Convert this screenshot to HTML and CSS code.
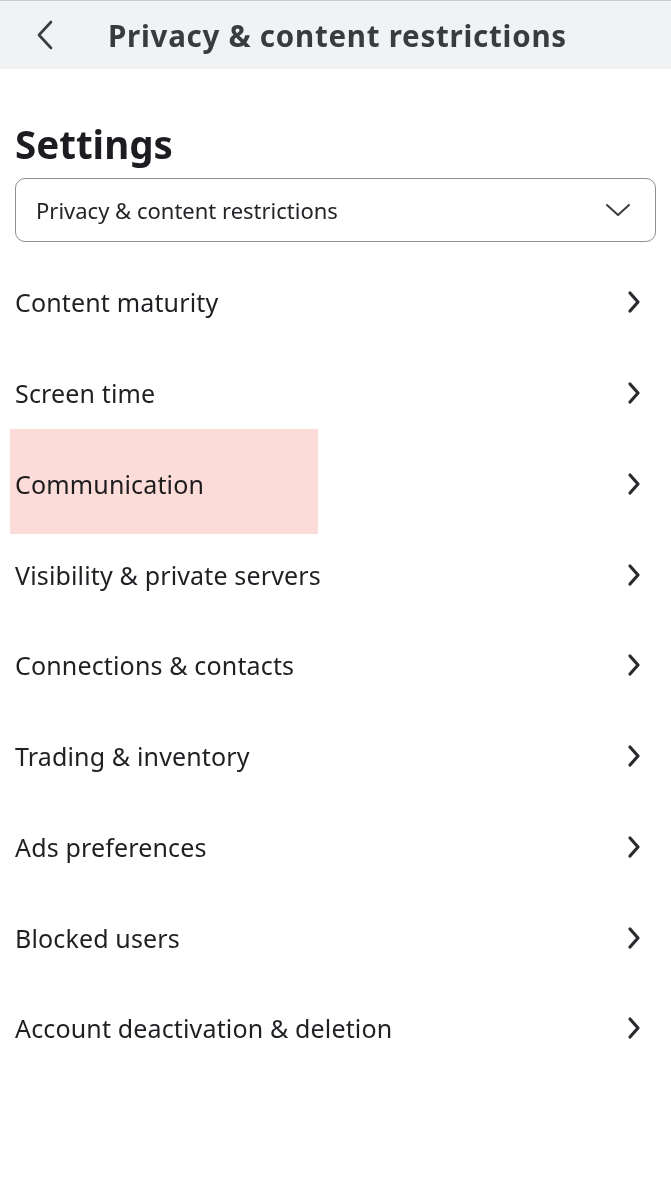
FILE: index.html
```html
<!DOCTYPE html>
<html lang="en">
<head>
<meta charset="utf-8">
<title>Privacy & content restrictions</title>
<link rel="stylesheet" href="styles.css">
</head>
<body>
<header class="topbar">
  <svg class="back" width="20" height="30" viewBox="0 0 20 30" aria-hidden="true"><path d="M16 2 L4 15 L16 28" fill="none" stroke="#3a3c3f" stroke-width="2.6" stroke-linecap="round" stroke-linejoin="round"/></svg>
  <h1 class="topbar-title">Privacy &amp; content restrictions</h1>
</header>
<main class="content">
  <h2 class="page-title">Settings</h2>
  <div class="select">
    <span class="select-label">Privacy &amp; content restrictions</span>
    <svg class="select-chev" width="26" height="16" viewBox="0 0 26 16" aria-hidden="true"><path d="M2 3 L13 13 L24 3" fill="none" stroke="#3a3c3f" stroke-width="2" stroke-linecap="round" stroke-linejoin="round"/></svg>
  </div>
  <ul class="menu">
    <li class="row"><span>Content maturity</span><svg class="chev" width="16" height="24" viewBox="0 0 16 24"><path d="M4 3 L12 12 L4 21" fill="none" stroke="#2a2b2e" stroke-width="3.2" stroke-linecap="round" stroke-linejoin="round"/></svg></li>
    <li class="row"><span>Screen time</span><svg class="chev" width="16" height="24" viewBox="0 0 16 24"><path d="M4 3 L12 12 L4 21" fill="none" stroke="#2a2b2e" stroke-width="3.2" stroke-linecap="round" stroke-linejoin="round"/></svg></li>
    <li class="row row-marked"><span>Communication</span><svg class="chev" width="16" height="24" viewBox="0 0 16 24"><path d="M4 3 L12 12 L4 21" fill="none" stroke="#2a2b2e" stroke-width="3.2" stroke-linecap="round" stroke-linejoin="round"/></svg><i class="mark"></i></li>
    <li class="row"><span>Visibility &amp; private servers</span><svg class="chev" width="16" height="24" viewBox="0 0 16 24"><path d="M4 3 L12 12 L4 21" fill="none" stroke="#2a2b2e" stroke-width="3.2" stroke-linecap="round" stroke-linejoin="round"/></svg></li>
    <li class="row"><span>Connections &amp; contacts</span><svg class="chev" width="16" height="24" viewBox="0 0 16 24"><path d="M4 3 L12 12 L4 21" fill="none" stroke="#2a2b2e" stroke-width="3.2" stroke-linecap="round" stroke-linejoin="round"/></svg></li>
    <li class="row"><span>Trading &amp; inventory</span><svg class="chev" width="16" height="24" viewBox="0 0 16 24"><path d="M4 3 L12 12 L4 21" fill="none" stroke="#2a2b2e" stroke-width="3.2" stroke-linecap="round" stroke-linejoin="round"/></svg></li>
    <li class="row"><span>Ads preferences</span><svg class="chev" width="16" height="24" viewBox="0 0 16 24"><path d="M4 3 L12 12 L4 21" fill="none" stroke="#2a2b2e" stroke-width="3.2" stroke-linecap="round" stroke-linejoin="round"/></svg></li>
    <li class="row"><span>Blocked users</span><svg class="chev" width="16" height="24" viewBox="0 0 16 24"><path d="M4 3 L12 12 L4 21" fill="none" stroke="#2a2b2e" stroke-width="3.2" stroke-linecap="round" stroke-linejoin="round"/></svg></li>
    <li class="row"><span>Account deactivation &amp; deletion</span><svg class="chev" width="16" height="24" viewBox="0 0 16 24"><path d="M4 3 L12 12 L4 21" fill="none" stroke="#2a2b2e" stroke-width="3.2" stroke-linecap="round" stroke-linejoin="round"/></svg></li>
  </ul>
</main>
</body>
</html>
```
FILE: styles.css
```css
* { box-sizing: border-box; }
html, body { margin: 0; padding: 0; background: #fff; }
body {
  font-family: "Noto Sans", "Open Sans", sans-serif;
  color: #1f2023;
  width: 671px;
}
.topbar {
  height: 69px;
  background: #f0f2f3;
  border-top: 1px solid #c9cccf;
  display: flex;
  align-items: center;
  padding-left: 35px;
}
.back { flex: none; }
.topbar-title {
  margin: 0 0 0 53px;
  font-size: 29.5px;
  font-weight: 700;
  color: #393b3e;
  letter-spacing: 0.75px;
  white-space: nowrap;
}
.content { padding: 51px 15px 0 15px; }
.page-title {
  margin: 0;
  font-size: 38.5px;
  font-weight: 700;
  line-height: 48px;
  color: #1c1d20;
}
.select {
  margin-top: 10px;
  height: 64px;
  border: 1.5px solid #8c8f95;
  border-radius: 10px;
  display: flex;
  align-items: center;
  justify-content: space-between;
  padding: 0 24px 0 20px;
}
.select-label { font-size: 22px; color: #232427; }
.menu { list-style: none; margin: 15px 0 0 0; padding: 0; }
.row {
  position: relative;
  height: 90.75px;
  display: flex;
  align-items: center;
  justify-content: space-between;
  font-size: 25px;
  letter-spacing: 0.15px;
  color: #1f2023;
  padding-right: 14px;
}
.chev { flex: none; }
.mark {
  position: absolute;
  left: -5px;
  top: -10px;
  width: 308px;
  height: 105px;
  background: #f9c4bf;
  mix-blend-mode: multiply;
  opacity: 0.6;
}
```
